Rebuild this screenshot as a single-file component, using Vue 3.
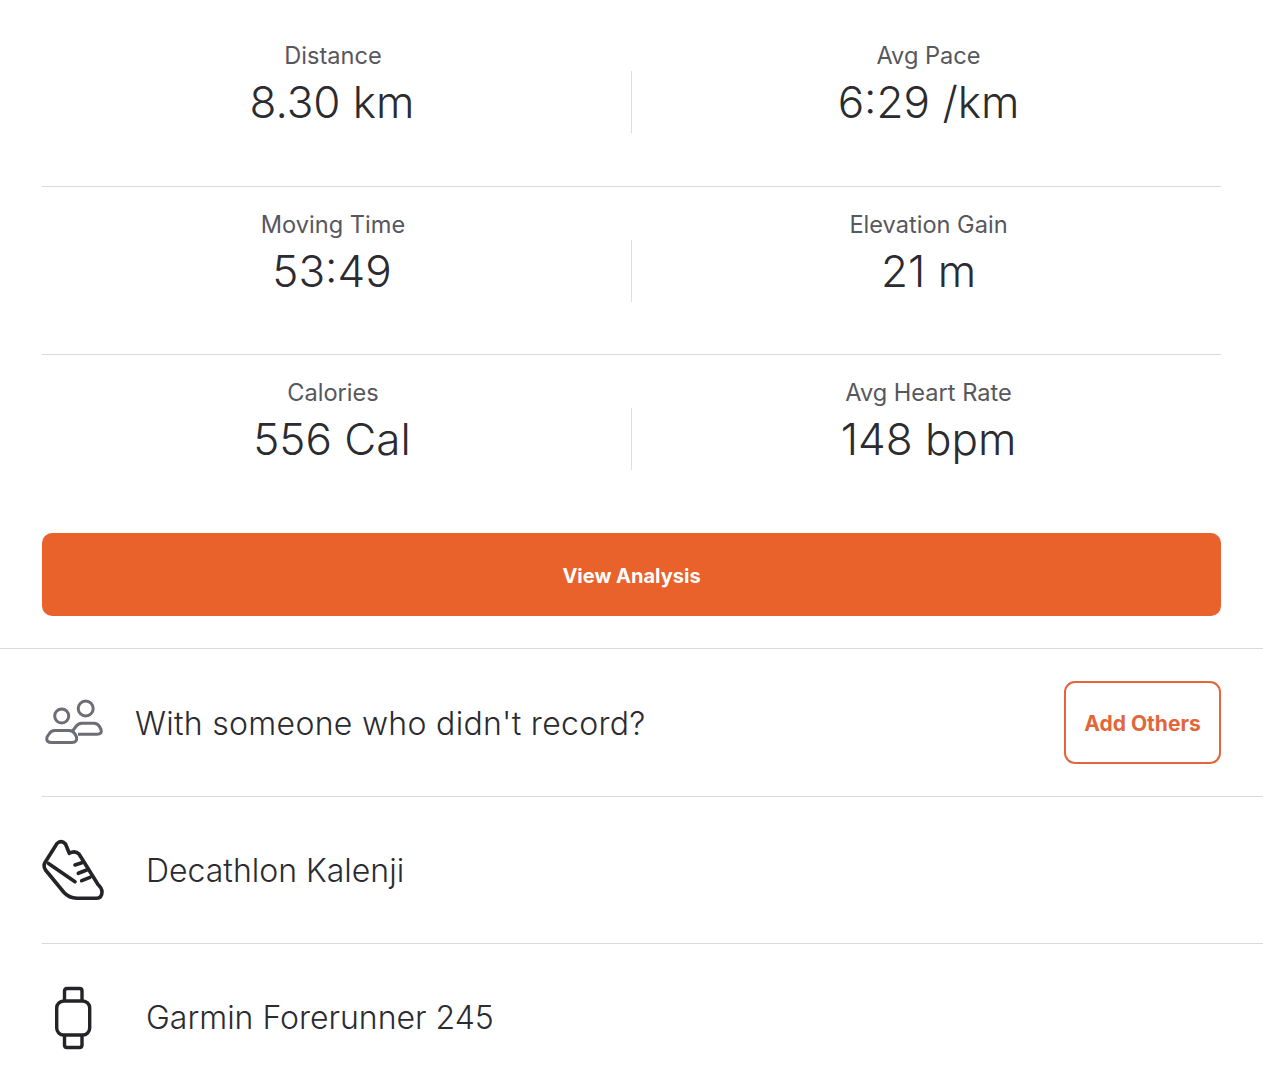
<template>
  <div class="page">
    <section class="stats">
      <div v-for="(row, i) in rows" :key="i" class="stat-row">
        <div class="stat stat-left">
          <div class="label">{{ row[0].label }}</div>
          <div class="value">{{ row[0].value }}</div>
        </div>
        <div class="vline"></div>
        <div class="stat stat-right">
          <div class="label">{{ row[1].label }}</div>
          <div class="value">{{ row[1].value }}</div>
        </div>
      </div>
    </section>

    <div class="cta">
      <button class="analysis">View Analysis</button>
    </div>

    <section class="list">
      <div class="item item-others">
        <svg class="icon" width="64" height="64" viewBox="0 0 64 64" fill="none" stroke="#6d6d78" stroke-width="3" stroke-linejoin="round">
          <circle cx="19.7" cy="25" r="7" />
          <circle cx="43.7" cy="17.5" r="7.5" />
          <path d="M36 43.2 H55 Q60.5 43.2 59 38.5 L57.5 35.5 Q55.5 32.2 52 32.2 H40 Q36 32.2 34 35.5 L30.5 40" />
          <path d="M13 39.5 H27 Q31 39.5 33 43 L34.5 46 Q35.5 51.5 30 51.5 H10 Q3.5 51.5 5 46 L7 43 Q9 39.5 13 39.5 Z" />
        </svg>
        <span class="item-text others-text">With someone who didn't record?</span>
        <button class="add">Add Others</button>
      </div>
      <div class="item">
        <svg class="icon" width="64" height="64" viewBox="0 0 64 64" fill="none" stroke="#242428" stroke-width="3.6" stroke-linecap="round" stroke-linejoin="round">
          <path d="M3 24.5 L15 5.5 Q19.5 1.5 23.5 6 L27.3 15.3 Q33 12 37 16 L56 46.5 Q60 50 60 54 Q60 60 54.5 60.3 L35 60.3 Q27 60 22 54.5 L3.5 32 Q1 28 3 24.5 Z" />
          <path d="M6.5 25.5 L33 43.7" />
          <path d="M33 27 L41.3 24.3 M36.3 35.3 L44.7 32 M39.7 42.7 L48 39.3" />
        </svg>
        <span class="item-text">Decathlon Kalenji</span>
      </div>
      <div class="item item-last">
        <svg class="icon" width="64" height="64" viewBox="0 0 64 64" fill="none" stroke="#242428" stroke-width="3.4" stroke-linejoin="round">
          <rect x="14.7" y="15" width="33" height="34" rx="7" />
          <path d="M22.5 15 V5 Q22.5 2.5 25 2.5 H37.5 Q40 2.5 40 5 V15" />
          <path d="M22.5 49 V59 Q22.5 61.5 25 61.5 H37.5 Q40 61.5 40 59 V49" />
        </svg>
        <span class="item-text">Garmin Forerunner 245</span>
      </div>
    </section>
  </div>
</template>

<script setup>
const rows = [
  [
    { label: "Distance", value: "8.30 km" },
    { label: "Avg Pace", value: "6:29 /km" },
  ],
  [
    { label: "Moving Time", value: "53:49" },
    { label: "Elevation Gain", value: "21 m" },
  ],
  [
    { label: "Calories", value: "556 Cal" },
    { label: "Avg Heart Rate", value: "148 bpm" },
  ],
];
</script>

<style>
html,
body {
  margin: 0;
  background: #fff;
}
</style>

<style scoped>
.page {
  width: 1263px;
  height: 1080px;
  overflow: hidden;
  background: #fff;
  font-family: Inter, "Liberation Sans", sans-serif;
  color: #2b2b30;
}

.stats {
  padding: 18px 42px 0;
}

.stat-row {
  display: flex;
  height: 168.5px;
  box-sizing: border-box;
  border-bottom: 1px solid #d9d9dc;
}

.stat-row:last-child {
  border-bottom: 0;
  height: 178px;
}

.stat {
  text-align: center;
}

.stat-left {
  width: 580px;
  margin-right: 9px;
}

.stat-right {
  width: 585px;
  margin-left: 4px;
}

.vline {
  width: 1px;
  height: 62px;
  margin-top: 53px;
  background: #dedee0;
}

.label {
  margin-top: 23px;
  font-size: 23.6px;
  line-height: 30px;
  color: #57575e;
}

.stat-left .label {
  padding-left: 2px;
}

.value {
  margin-top: 4px;
  font-size: 44px;
  line-height: 54px;
  font-weight: 300;
}

.cta {
  padding: 0 42px 32px;
  border-bottom: 1px solid #d9d9dc;
}

.analysis {
  display: block;
  width: 100%;
  height: 83px;
  padding-top: 4px;
  border: 0;
  border-radius: 10px;
  background: #e9622b;
  color: #fff;
  font-family: inherit;
  font-size: 20px;
  font-weight: 700;
}

.list {
  padding-left: 42px;
}

.item {
  display: flex;
  align-items: center;
  height: 147px;
  box-sizing: border-box;
  border-bottom: 1px solid #d9d9dc;
  padding-right: 42px;
}

.item-others {
  height: 148px;
}

.item-last {
  border-bottom: 0;
}

.icon {
  flex: none;
}

.item-text {
  margin-left: 40px;
  font-size: 32px;
  font-weight: 300;
}

.others-text {
  margin-left: 29px;
  padding-top: 2px;
  letter-spacing: 0.3px;
}

.add {
  margin-left: auto;
  width: 157px;
  height: 83px;
  padding-top: 3px;
  border: 2.5px solid #e2663a;
  border-radius: 11px;
  background: #fff;
  color: #e2663a;
  font-family: inherit;
  font-size: 21px;
  font-weight: 700;
}
</style>
